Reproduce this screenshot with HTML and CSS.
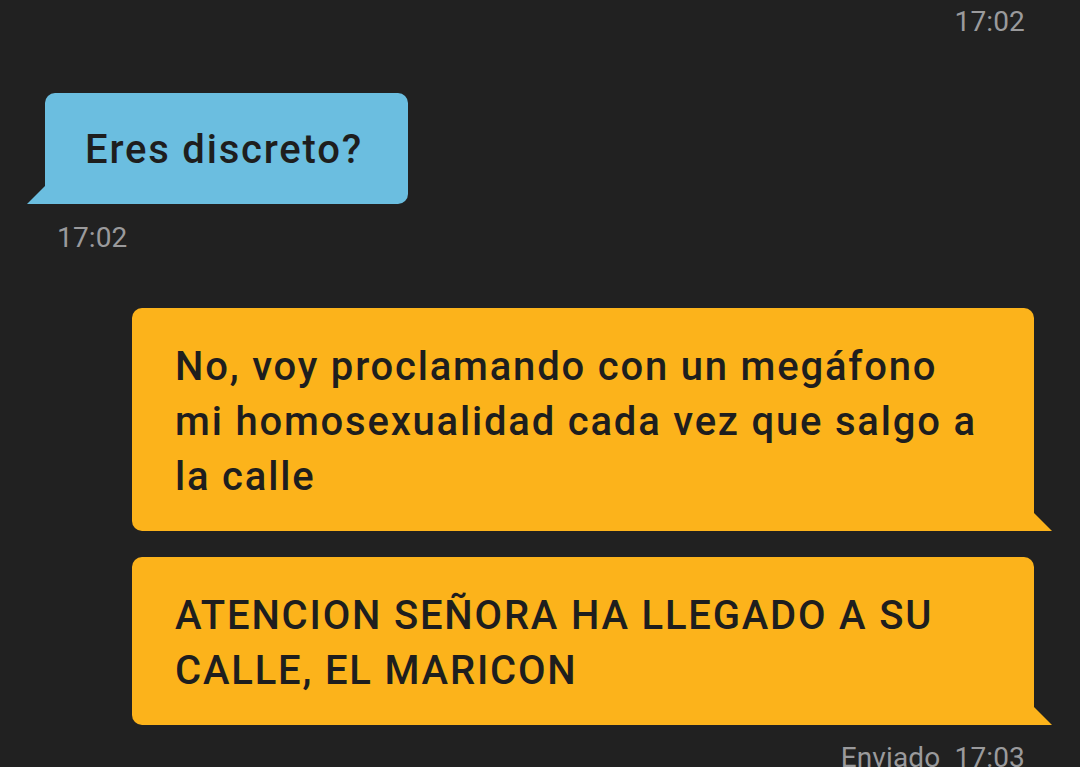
FILE: index.html
```html
<!DOCTYPE html>
<html lang="es">
<head>
<meta charset="utf-8">
<link rel="stylesheet" href="styles.css">
</head>
<body>
<main class="chat">
  <div class="time time-right top">17:02</div>
  <div class="bubble in">Eres discreto?</div>
  <div class="time time-left">17:02</div>
  <div class="out-group">
    <div class="bubble out">No, voy proclamando con un megáfono<br>mi homosexualidad cada vez que salgo a<br>la calle</div>
    <div class="bubble out">ATENCION SEÑORA HA LLEGADO A SU<br>CALLE, EL MARICON</div>
  </div>
  <div class="time time-right sent">Enviado&nbsp; 17:03</div>
</main>
</body>
</html>
```
FILE: styles.css
```css
html, body {
  margin: 0;
  padding: 0;
  background: #212121;
  height: 767px;
  overflow: hidden;
}
.chat {
  display: flex;
  flex-direction: column;
  font-family: Roboto, "Liberation Sans", sans-serif;
  color: #1e1e1e;
}
.time {
  font-size: 28px;
  line-height: 34px;
  color: #9a9a9c;
  letter-spacing: 0.005em;
}
.time-right {
  align-self: flex-end;
  margin-right: 55px;
}
.top {
  margin-top: 5px;
}
.time-left {
  margin-left: 57px;
  margin-top: 17px;
}
.bubble {
  position: relative;
  font-size: 40px;
  font-weight: 500;
  line-height: 55px;
  letter-spacing: 0.045em;
}
.in {
  align-self: flex-start;
  margin-left: 45px;
  margin-top: 54px;
  background: #6bbee0;
  border-radius: 10px 10px 10px 0;
  padding: 29px 45px 27px 40px;
}
.in::before {
  content: "";
  position: absolute;
  left: -18px;
  bottom: 0;
  width: 18px;
  height: 18px;
  background: #6bbee0;
  clip-path: polygon(100% 0, 100% 100%, 0 100%);
}
.out-group {
  display: flex;
  flex-direction: column;
  gap: 26px;
  margin-top: 53px;
  margin-left: 132px;
  margin-right: 46px;
}
.out {
  background: #fcb31b;
  border-radius: 10px 10px 0 10px;
  padding: 31px 40px 27px 43px;
}
.out::after {
  content: "";
  position: absolute;
  right: -18px;
  bottom: 0;
  width: 18px;
  height: 18px;
  background: #fcb31b;
  clip-path: polygon(0 0, 100% 100%, 0 100%);
}
.sent {
  margin-top: 16px;
}
```
